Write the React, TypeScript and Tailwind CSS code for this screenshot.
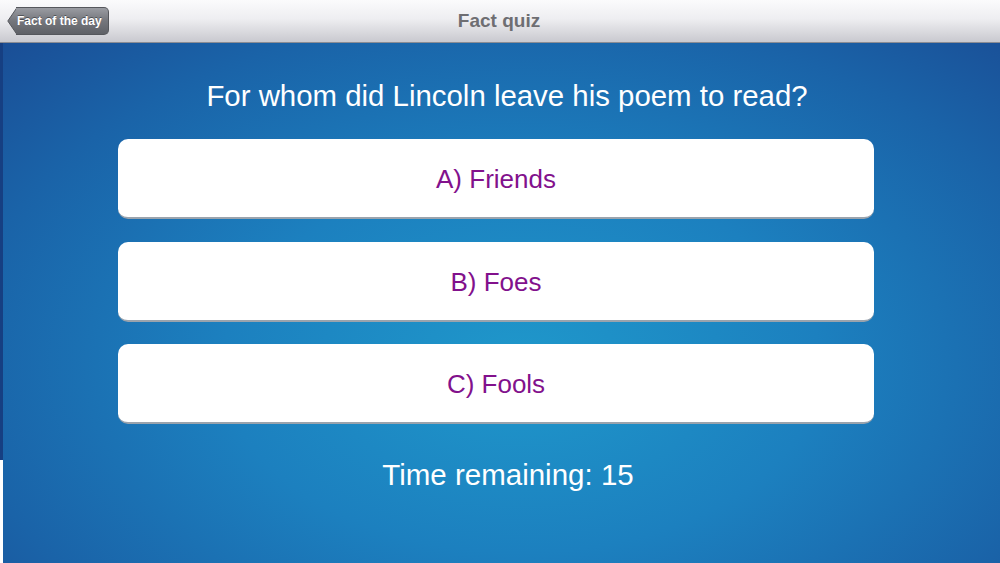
import React from "react";

const font = { fontFamily: '"Liberation Sans", Arial, sans-serif' };

function Answer({ label, mt }: { label: string; mt: string }) {
  return (
    <div
      className={`${mt} h-[80px] w-[756px] rounded-[10px] bg-white border-b-2 border-[#9aa3ad] flex items-center justify-center`}
    >
      <span className="text-[26px] text-[#82118c] pt-[2px]">{label}</span>
    </div>
  );
}

export default function App() {
  return (
    <div className="w-[1000px] h-[563px] overflow-hidden flex flex-col" style={font}>
      <div className="h-[43px] shrink-0 relative flex items-center justify-center bg-[linear-gradient(to_bottom,#fbfbfc_0%,#eeeef1_45%,#c9c9cf_100%)] border-b border-[#8a8c94]">
        <span className="text-[19px] font-bold text-[#6e6e72] ml-[-2px]">Fact quiz</span>
        <div className="absolute left-[7px] top-[7px] h-[28px] flex items-center">
          <svg width="10" height="28" viewBox="0 0 10 28" className="block">
            <defs>
              <linearGradient id="bk" x1="0" y1="0" x2="0" y2="1">
                <stop offset="0" stopColor="#9a9ca2" />
                <stop offset="0.5" stopColor="#74767c" />
                <stop offset="1" stopColor="#5f6167" />
              </linearGradient>
            </defs>
            <path d="M10 0.5 L0.8 14 L10 27.5 Z" fill="url(#bk)" stroke="#55575c" strokeWidth="1" />
          </svg>
          <div className="h-[28px] ml-[-1px] pr-[6px] pl-[1px] flex items-center rounded-r-[5px] bg-[linear-gradient(to_bottom,#9a9ca2_0%,#74767c_50%,#5f6167_100%)] border border-l-0 border-[#55575c]">
            <span className="text-[12px] font-bold text-white [text-shadow:0_-1px_0_rgba(0,0,0,0.4)]">Fact of the day</span>
          </div>
        </div>
      </div>
      <div className="flex-1 flex">
        <div className="w-[3px] shrink-0 flex flex-col">
          <div className="h-[417px] bg-[#163f82]" />
          <div className="flex-1 bg-white" />
        </div>
        <div className="flex-1 min-w-0 flex flex-col items-start bg-[radial-gradient(ellipse_75%_90%_at_52%_62%,#1f98cb_0%,#1c80bf_40%,#1a63a8_75%,#1a4c94_100%)]">
          <div className="w-[1008px] shrink-0 text-center text-white text-[29.4px] mt-[36px] leading-[34px]">
            For whom did Lincoln leave his poem to read?
          </div>
          <div className="ml-[115px] flex flex-col">
            <Answer label="A) Friends" mt="mt-[26px]" />
            <Answer label="B) Foes" mt="mt-[23px]" />
            <Answer label="C) Fools" mt="mt-[22px]" />
          </div>
          <div className="w-[1010px] shrink-0 text-center text-white text-[29.5px] mt-[34px] leading-[34px]">
            Time remaining: 15
          </div>
        </div>
      </div>
    </div>
  );
}
